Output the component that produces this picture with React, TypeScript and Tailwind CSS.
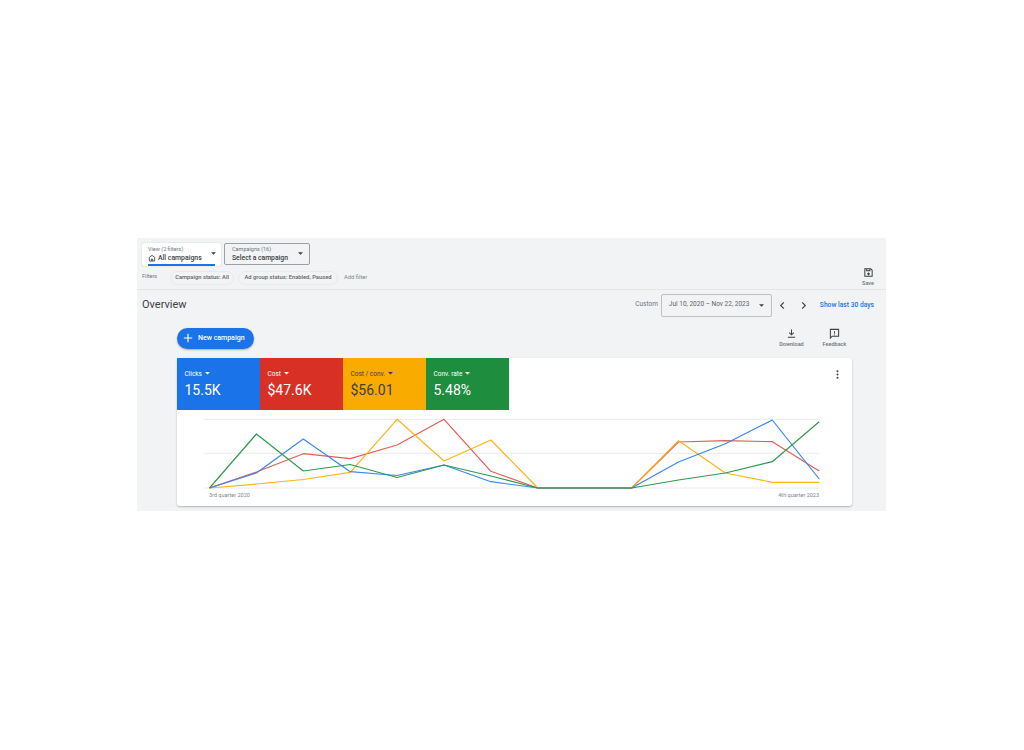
const XS = Array.from({ length: 14 }, (_, i) => 32.5 + 46.9 * i);

// y values are relative to the top of the card
const SERIES = [
  { color: "#e06055", ys: [130, 114, 95.7, 100.7, 87, 61.3, 113.3, 130, 130, 130, 84, 82.7, 83.7, 113] },
  { color: "#fbb41a", ys: [130, 126, 121.5, 114.3, 61.3, 103, 82, 130, 130, 130, 82.7, 115, 124.3, 124.3] },
  { color: "#3b86f0", ys: [130, 115, 81, 113.7, 117.5, 107, 123.7, 130, 130, 130, 104, 85.7, 62, 121] },
  { color: "#2f9a4d", ys: [130, 76, 113, 106.5, 119.5, 107, 118, 130, 130, 130, 122, 115, 103.7, 63.7] },
];

const TILES = [
  { label: "Clicks", value: "15.5K", bg: "bg-[#1a73e8]", text: "text-white" },
  { label: "Cost", value: "$47.6K", bg: "bg-[#d93025]", text: "text-white" },
  { label: "Cost / conv.", value: "$56.01", bg: "bg-[#f9ab00]", text: "text-[#3c4043]" },
  { label: "Conv. rate", value: "5.48%", bg: "bg-[#1e8e3e]", text: "text-white" },
];

function Caret({ className }: { className: string }) {
  return (
    <svg viewBox="0 0 6 3" className={className} fill="currentColor">
      <path d="M0 0h6L3 3z" />
    </svg>
  );
}

function Chart() {
  return (
    <svg width="675" height="82" viewBox="0 52 675 82" fill="none" className="block">
      {[61.3, 95.3, 130].map(y => (
        <line key={y} x1="27" x2="642" y1={y} y2={y} stroke="#e8eaed" strokeWidth="1" />
      ))}
      {SERIES.map(s => (
        <polyline
          key={s.color}
          points={s.ys.map((y, i) => `${XS[i]},${y}`).join(" ")}
          stroke={s.color}
          strokeWidth="1.2"
          strokeLinejoin="round"
        />
      ))}
    </svg>
  );
}

export default function App() {
  return (
    <div className="h-[750px] w-[1024px] bg-white flex items-center justify-center pr-[1px] pb-[2px] font-['Roboto',sans-serif]">
      <div className="w-[749px] h-[273px] bg-[#f1f3f4] text-[#3c4043] flex flex-col">
        {/* view and campaign pickers */}
        <div className="flex gap-[3px] pl-[5px] pt-[5px]">
          <div className="w-[79px] h-[23px] bg-white rounded-[2px] shadow-[0_0_1px_#9aa0a6] px-[6px] pt-[3px] relative">
            <div className="text-[5.5px] leading-[7px] text-[#70757a]">View (2 filters)</div>
            <div className="flex items-center gap-[2px] mt-[1px] text-[6.9px] leading-[9px] font-medium text-[#3c4043]">
              <svg viewBox="0 0 24 24" className="w-[8px] h-[8px]" fill="none" stroke="#3c4043" strokeWidth="2.5">
                <path d="M4 21V10l8-6 8 6v11zM10 21v-6h4v6" />
              </svg>
              All campaigns
            </div>
            <Caret className="absolute right-[5px] top-[9px] w-[5px] h-[3px] text-[#3c4043]" />
            <div className="absolute left-[6px] right-[6px] bottom-0 h-[1.5px] bg-[#1a73e8]" />
          </div>
          <div className="w-[86px] h-[22px] bg-[#f1f3f4] rounded-[2px] border border-[#9aa0a6] px-[7px] pt-[2px] relative">
            <div className="text-[5.5px] leading-[7px] text-[#70757a]">Campaigns (16)</div>
            <div className="mt-[1px] text-[6.8px] leading-[9px] font-medium text-[#3c4043]">Select a campaign</div>
            <Caret className="absolute right-[6px] top-[8px] w-[5px] h-[3px] text-[#3c4043]" />
          </div>
        </div>

        {/* filters */}
        <div className="flex items-start justify-between pl-[5px] pr-[12px] h-[24px] border-b border-[#e3e5e7]">
          <div className="flex items-center pt-[5px]">
            <span className="text-[5.5px] w-[28px] -mt-[2px] text-[#70757a]">Filters</span>
            <div className="flex items-center gap-[4px]">
              <span className="h-[14px] w-[64px] rounded-full border border-[#e8eaed] flex items-center justify-center text-[5.8px] font-medium text-[#5f6368]">Campaign status: All</span>
              <span className="h-[14px] w-[100px] rounded-full border border-[#e8eaed] flex items-center justify-center text-[5.8px] font-medium text-[#5f6368]">Ad group status: Enabled, Paused</span>
              <span className="text-[5.8px] ml-[2px] text-[#80868b]">Add filter</span>
            </div>
          </div>
          <div className="flex flex-col items-center pt-[1px]">
            <svg viewBox="0 0 24 24" className="w-[11px] h-[11px]" fill="none" stroke="#3c4043" strokeWidth="2.2">
              <path d="M4 4h13l3 3v13H4zM8 4v4h7V4M9 15h6M12 12v6" />
            </svg>
            <span className="text-[5.5px] leading-[7px] mt-[2px] font-medium text-[#70757a]">Save</span>
          </div>
        </div>

        {/* overview header */}
        <div className="flex items-start justify-between pl-[5px] pr-[12px] pt-[3px]">
          <span className="text-[11px] leading-[23px] text-[#3c4043]">Overview</span>
          <div className="flex items-center mt-[1px]">
            <span className="text-[6.5px] text-[#70757a] mr-[3px]">Custom</span>
            <div className="w-[111px] h-[23px] rounded-[2px] border border-[#bdc1c6] flex items-center justify-between pl-[7px] pr-[7px] text-[6.5px] text-[#5f6368]">
              Jul 10, 2020 – Nov 22, 2023
              <Caret className="w-[5px] h-[3px] text-[#3c4043]" />
            </div>
            <svg viewBox="0 0 24 24" className="w-[11px] h-[11px] ml-[5px]" fill="none" stroke="#3c4043" strokeWidth="2.4">
              <path d="M15 5l-7 7 7 7" />
            </svg>
            <svg viewBox="0 0 24 24" className="w-[11px] h-[11px] ml-[10px]" fill="none" stroke="#3c4043" strokeWidth="2.4">
              <path d="M9 5l7 7-7 7" />
            </svg>
            <span className="text-[6.7px] font-medium text-[#1a73e8] ml-[11px]">Show last 30 days</span>
          </div>
        </div>

        {/* actions */}
        <div className="flex items-start justify-between pl-[40px] pr-[39px] pt-[11px]">
          <div className="w-[77px] h-[21px] rounded-full bg-[#1a73e8] shadow-[0_1px_2px_rgba(60,64,67,0.4)] flex items-center pl-[6px] gap-[5px] text-white text-[7px] font-medium">
            <svg viewBox="0 0 12 12" className="w-[10px] h-[10px]" stroke="white" strokeWidth="1.4">
              <path d="M6 1v10M1 6h10" />
            </svg>
            New campaign
          </div>
          <div className="flex gap-[18px] text-[5.5px] font-medium text-[#70757a]">
            <div className="flex flex-col items-center w-[25px]">
              <svg viewBox="0 0 24 24" className="w-[11px] h-[11px] mb-[1px]" fill="none" stroke="#3c4043" strokeWidth="2.2">
                <path d="M12 3v12M7 10l5 5 5-5M4 20h16" />
              </svg>
              Download
            </div>
            <div className="flex flex-col items-center w-[25px]">
              <svg viewBox="0 0 24 24" className="w-[11px] h-[11px] mb-[1px]" fill="none" stroke="#3c4043" strokeWidth="2.2">
                <path d="M3 3h18v15H7l-4 4zM12 7v5M12 14v2" />
              </svg>
              Feedback
            </div>
          </div>
        </div>

        {/* scorecards and chart */}
        <div className="ml-[40px] mt-[9px] w-[675px] h-[148px] bg-white rounded-[3px] shadow-[0_1px_2px_rgba(60,64,67,0.35)] relative">
          <div className="flex h-[52px]">
            {TILES.map(t => (
              <div key={t.label} className={`w-[83px] pl-[7.5px] pt-[12px] ${t.bg} ${t.text}`}>
                <div className="flex items-center gap-[3px] text-[6.5px] leading-[8px]">
                  {t.label}
                  <Caret className="w-[5px] h-[2.5px]" />
                </div>
                <div className="text-[14px] leading-[18px] mt-[3px]">{t.value}</div>
              </div>
            ))}
          </div>
          <svg viewBox="0 0 24 24" className="absolute right-[9px] top-[11px] w-[11px] h-[11px]" fill="#3c4043">
            <circle cx="12" cy="5" r="2.2" />
            <circle cx="12" cy="12" r="2.2" />
            <circle cx="12" cy="19" r="2.2" />
          </svg>
          <Chart />
          <div className="flex justify-between pl-[32px] pr-[33px] text-[5.5px] leading-[7px] text-[#80868b]">
            <span>3rd quarter 2020</span>
            <span>4th quarter 2023</span>
          </div>
        </div>
      </div>
    </div>
  );
}
